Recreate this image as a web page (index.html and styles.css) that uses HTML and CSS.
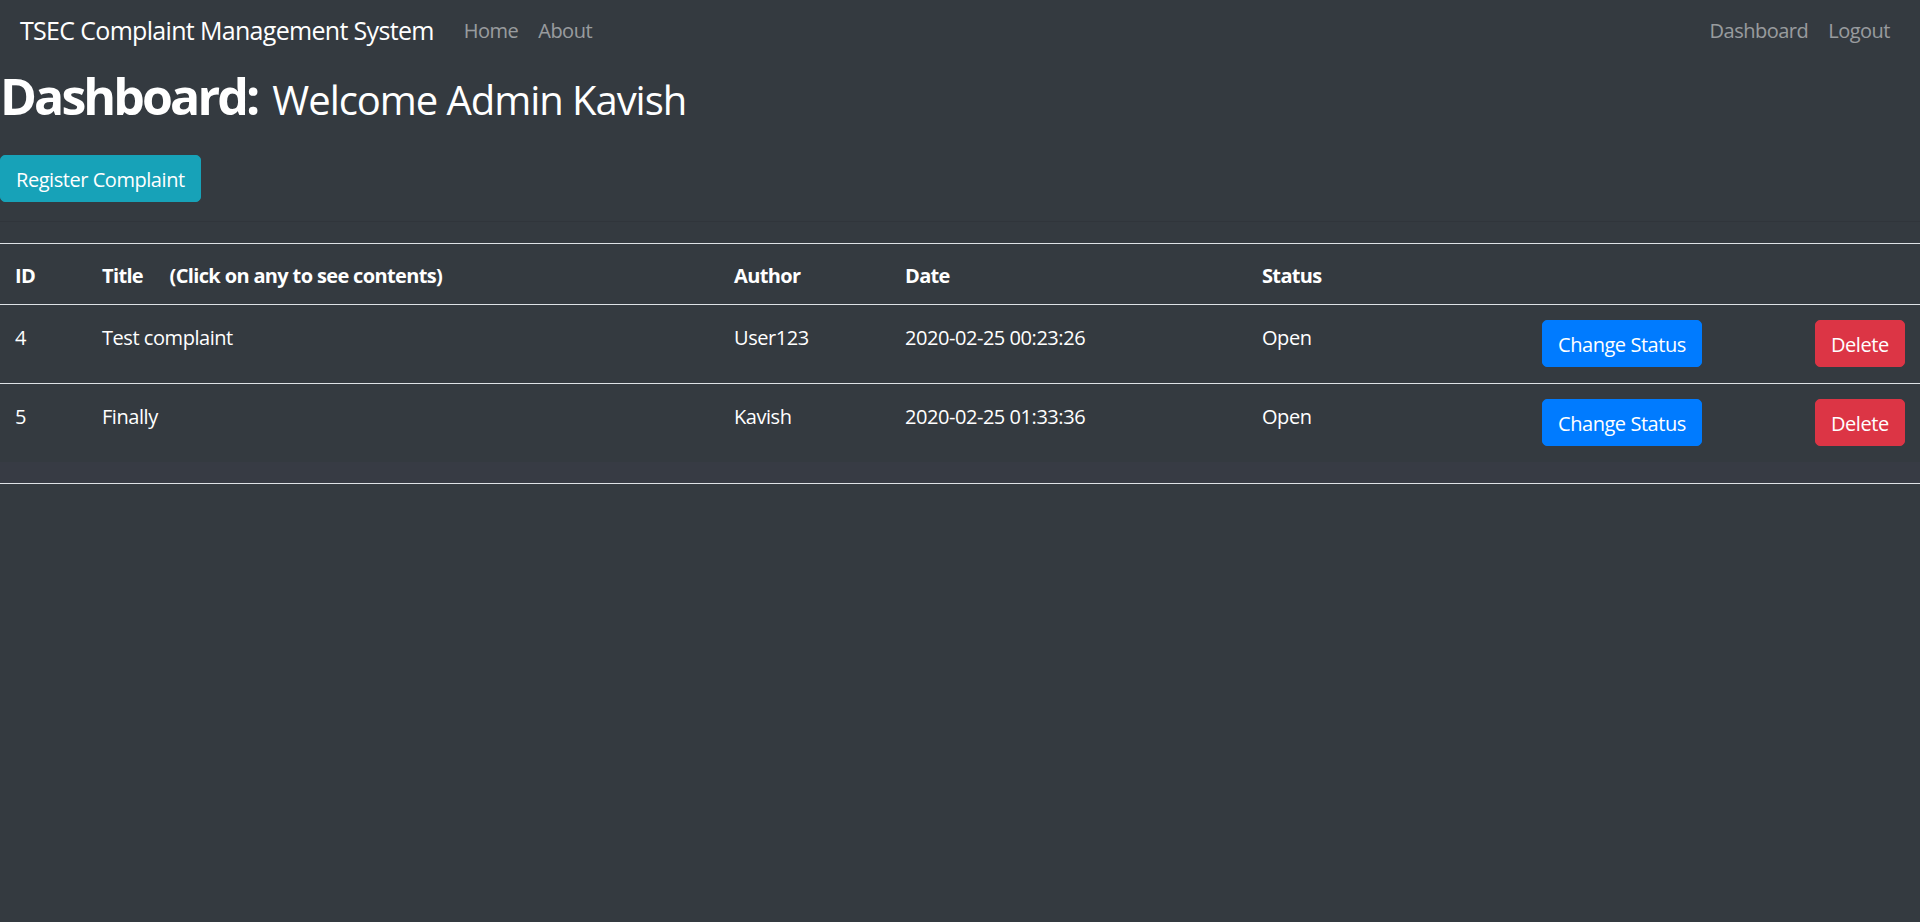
FILE: index.html
```html
<!DOCTYPE html>
<html lang="en">
<head>
<meta charset="utf-8">
<title>TSEC Complaint Management System</title>
<link rel="stylesheet" href="styles.css">
</head>
<body>
<nav class="navbar">
  <a class="brand" href="#">TSEC Complaint Management System</a>
  <ul class="nav">
    <li><a class="nav-link" href="#">Home</a></li>
    <li><a class="nav-link" href="#">About</a></li>
  </ul>
  <ul class="nav nav-right">
    <li><a class="nav-link" href="#">Dashboard</a></li>
    <li><a class="nav-link" href="#">Logout</a></li>
  </ul>
</nav>
<header class="page-head">
  <h1 class="title"><span class="title-strong">Dashboard:</span> <span class="title-sub">Welcome Admin Kavish</span></h1>
  <button class="btn btn-info">Register Complaint</button>
</header>
<table class="complaints">
  <colgroup>
    <col class="c-id"><col class="c-title"><col class="c-author"><col class="c-date"><col class="c-status"><col class="c-change"><col class="c-del">
  </colgroup>
  <thead>
    <tr>
      <th>ID</th>
      <th>Title <span class="hint">(Click on any to see contents)</span></th>
      <th>Author</th>
      <th>Date</th>
      <th>Status</th>
      <th></th>
      <th></th>
    </tr>
  </thead>
  <tbody>
    <tr>
      <td class="cell-text">4</td>
      <td class="cell-text">Test complaint</td>
      <td class="cell-text">User123</td>
      <td class="cell-text">2020-02-25 00:23:26</td>
      <td class="cell-text">Open</td>
      <td><button class="btn btn-primary">Change Status</button></td>
      <td><button class="btn btn-danger">Delete</button></td>
    </tr>
    <tr>
      <td class="cell-text">5</td>
      <td class="cell-text">Finally</td>
      <td class="cell-text">Kavish</td>
      <td class="cell-text">2020-02-25 01:33:36</td>
      <td class="cell-text">Open</td>
      <td><button class="btn btn-primary">Change Status</button></td>
      <td><button class="btn btn-danger">Delete</button></td>
    </tr>
    <tr class="spacer">
      <td colspan="7"></td>
    </tr>
  </tbody>
</table>
</body>
</html>
```

FILE: styles.css
```css
* { box-sizing: border-box; }

html, body {
  margin: 0;
  padding: 0;
  background: #343a40;
  color: #ffffff;
  font-family: "Open Sans", "Noto Sans", "Liberation Sans", sans-serif;
  font-size: 20px;
  line-height: 1.5;
  min-height: 922px;
}

.navbar {
  display: flex;
  align-items: center;
  height: 66px;
  padding: 8px 20px 12px;
}

.brand {
  color: #ffffff;
  text-decoration: none;
  font-size: 25px;
  line-height: 37.5px;
  margin-right: 20px;
  letter-spacing: -0.68px;
}

.nav {
  display: flex;
  list-style: none;
  margin: 0;
  padding: 0;
}

.nav-right { margin-left: auto; }

.nav-link {
  display: block;
  padding: 5px 10px;
  color: rgba(255, 255, 255, 0.5);
  text-decoration: none;
  letter-spacing: -0.5px;
}

.page-head {
  padding-bottom: 19px;
  border-bottom: 1px solid #30353b;
}

.title {
  margin: 0 0 29px;
  height: 60px;
  font-size: 50px;
  line-height: 60px;
  font-weight: 400;
}

.title-strong {
  font-weight: 700;
  letter-spacing: -2.9px;
}

.title-sub {
  font-size: 40px;
  line-height: 1;
  letter-spacing: -1.05px;
  margin-left: 2px;
}

.btn {
  display: inline-block;
  font-family: inherit;
  font-size: 20px;
  line-height: 30px;
  padding: 8.5px 15px 6.5px;
  border: 1.25px solid transparent;
  border-radius: 5px;
  color: #ffffff;
  cursor: pointer;
  letter-spacing: -0.45px;
}

.btn-info { background: #17a2b8; border-color: #17a2b8; }
.btn-primary { background: #007bff; border-color: #007bff; }
.btn-danger { background: #dc3545; border-color: #dc3545; }

.complaints {
  width: 100%;
  margin-top: 21px;
  border-collapse: collapse;
  table-layout: fixed;
  letter-spacing: -0.45px;
}

.c-id { width: 87px; }
.c-title { width: 632px; }
.c-author { width: 171px; }
.c-date { width: 357px; }
.c-status { width: 280px; }
.c-change { width: 273px; }
.c-del { width: 120px; }

.complaints th,
.complaints td {
  padding: 15px 15px 16px;
  text-align: left;
  vertical-align: top;
  border-top: 1px solid #dee2e6;
}

.complaints th {
  padding: 17px 15px 13px;
  font-weight: 700;
  border-bottom: 1px solid #dee2e6;
  letter-spacing: -0.65px;
}

.complaints .cell-text {
  padding: 18px 15px 12px;
}

.hint { margin-left: 22px; }

.complaints .spacer td {
  border-top: none;
  padding: 0;
  height: 21px;
  background: #373b44;
  border-bottom: 1px solid #dee2e6;
}
```
